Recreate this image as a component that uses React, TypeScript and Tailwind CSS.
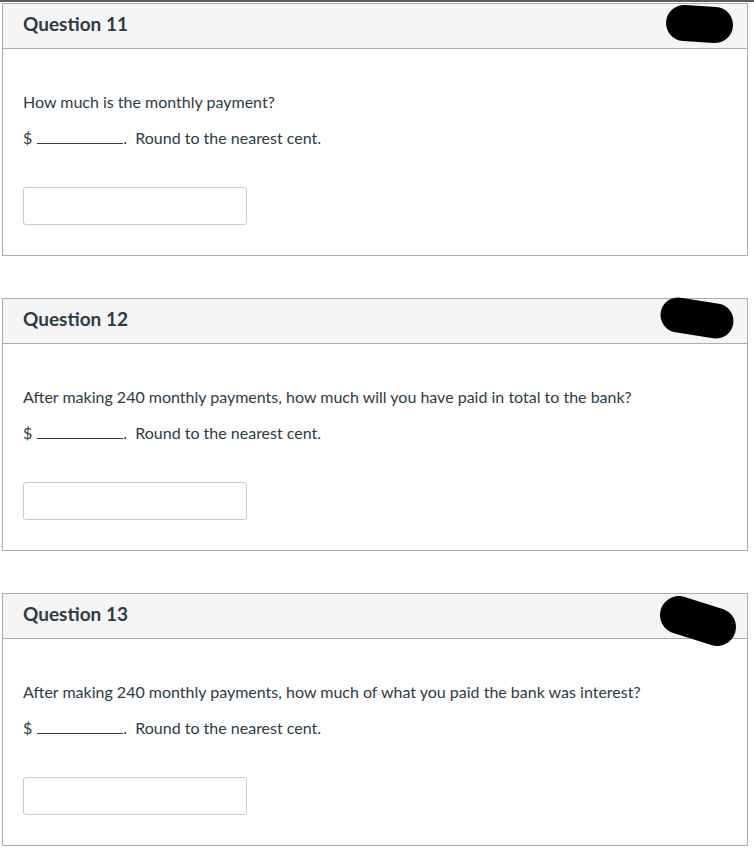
import React from "react";

type Q = { n: number; text: string };

const questions: Q[] = [
  { n: 11, text: "How much is the monthly payment?" },
  {
    n: 12,
    text: "After making 240 monthly payments, how much will you have paid in total to the bank?",
  },
  {
    n: 13,
    text: "After making 240 monthly payments, how much of what you paid the bank was interest?",
  },
];

function Card({ q }: { q: Q }) {
  return (
    <div className="ml-[2px] w-[746px] border border-[#acacac] bg-white">
      <div className="flex h-[45px] items-center border-b border-[#acacac] bg-[#f5f5f5] px-[20px] pb-[3px]">
        <span className="text-[19px] font-bold text-[#2d3b45]">Question {q.n}</span>
      </div>
      <div className="px-[20px] pt-[41px] pb-[30px] text-[16px] text-[#2d3b45]">
        <p className="leading-[24px]">{q.text}</p>
        <p className="mt-[12px] flex items-baseline leading-[24px]">
          <span>$</span>
          <span className="ml-[5px] inline-block h-[16px] w-[86px] border-b border-[#2d3b45]"></span>
          <span>.&nbsp;&nbsp;Round to the nearest cent.</span>
        </p>
        <div className="mt-[37px] h-[38px] w-[224px] rounded-[3px] border border-[#c7cbce] bg-white"></div>
      </div>
    </div>
  );
}

export default function App() {
  return (
    <div
      className="relative h-[853px] w-[754px] overflow-hidden bg-white"
      style={{ fontFamily: "Lato, 'Noto Sans', sans-serif" }}
    >
      <div className="h-[2px] w-full bg-[#5c5c5c]"></div>
      <div className="mt-[1px] flex flex-col gap-[42px]">
        {questions.map((q) => (
          <Card key={q.n} q={q} />
        ))}
      </div>
      <svg
        className="pointer-events-none absolute left-0 top-0"
        width="754"
        height="853"
        viewBox="0 0 754 853"
      >
        <path d="M684 23 L715 25" stroke="#000" strokeWidth="36" strokeLinecap="round" fill="none" />
        <path d="M678 315 L716 321" stroke="#000" strokeWidth="35" strokeLinecap="round" fill="none" />
        <path d="M679 615 L717 627" stroke="#000" strokeWidth="38" strokeLinecap="round" fill="none" />
      </svg>
    </div>
  );
}
